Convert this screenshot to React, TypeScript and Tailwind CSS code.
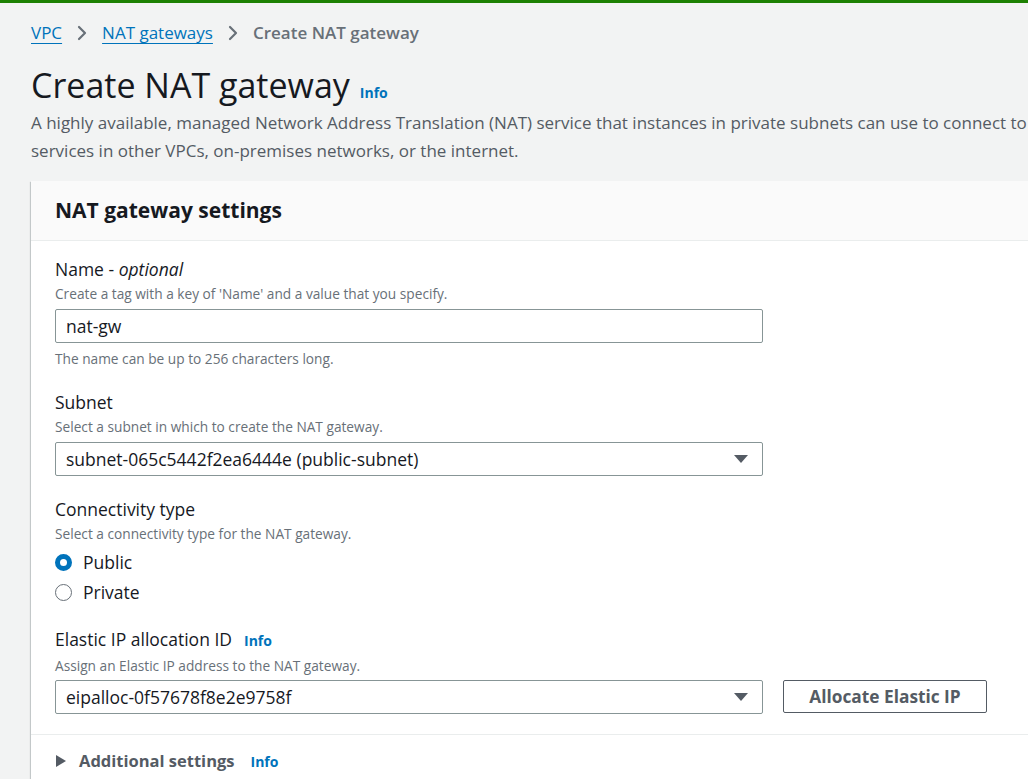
import React from 'react';

const font = { fontFamily: '"Open Sans", "Noto Sans", sans-serif' };

function Chevron() {
  return (
    <svg width="12" height="18" viewBox="0 0 12 18" className="mx-[14px] shrink-0">
      <path d="M3 3l6 6-6 6" fill="none" stroke="#687078" strokeWidth="2.2" strokeLinecap="round" strokeLinejoin="round" />
    </svg>
  );
}

function Caret() {
  return (
    <svg width="14" height="10" viewBox="0 0 14 10" className="shrink-0">
      <path d="M0 1h14L7 9z" fill="#545b64" />
    </svg>
  );
}

function Info() {
  return <span className="text-[14px] font-bold text-[#0073bb]">Info</span>;
}

function Field({ label, desc, className, children }: { label: React.ReactNode; desc?: string; className?: string; children: React.ReactNode }) {
  return (
    <div className={`flex flex-col ${className ?? ''}`}>
      <div className="text-[17.5px] leading-[26px] text-[#16191f]">{label}</div>
      {desc && <div className="mt-[1px] text-[13.7px] leading-[22px] text-[#687078]">{desc}</div>}
      {children}
    </div>
  );
}

function SelectBox({ value }: { value: string }) {
  return (
    <div className="flex h-[34px] w-[708px] items-center justify-between rounded-[2px] border border-[#879596] bg-white pl-[10px] pr-[14px]">
      <span className="text-[17.5px] text-[#16191f]">{value}</span>
      <Caret />
    </div>
  );
}

function Radio({ checked, label }: { checked?: boolean; label: string }) {
  return (
    <label className="flex h-[30px] items-center gap-[11px]">
      {checked ? (
        <span className="h-[17px] w-[17px] rounded-full border-[5px] border-[#0073bb] bg-white" />
      ) : (
        <span className="h-[17px] w-[17px] rounded-full border-[1.5px] border-[#687078] bg-white" />
      )}
      <span className="text-[17.5px] text-[#16191f]">{label}</span>
    </label>
  );
}

export default function App() {
  return (
    <div className="min-h-screen w-full overflow-hidden bg-[#f2f3f3]" style={font}>
      <div className="h-[3px] w-full bg-[#1d8102]" />
      <div className="w-[1240px] pl-[31px]">
        {/* Breadcrumb */}
        <nav className="flex h-[60px] items-center text-[17px]">
          <a className="text-[#0073bb] underline underline-offset-[4px]">VPC</a>
          <Chevron />
          <a className="text-[#0073bb] underline underline-offset-[4px]">NAT gateways</a>
          <Chevron />
          <span className="font-semibold text-[#687078]">Create NAT gateway</span>
        </nav>

        {/* Header */}
        <div className="flex items-baseline gap-[10px]">
          <h1 className="text-[34px] leading-[44px] text-[#16191f]">Create NAT gateway</h1>
          <Info />
        </div>
        <p className="mt-[2px] text-[17px] leading-[28px] text-[#545b64]">
          A highly available, managed Network Address Translation (NAT) service that instances in private subnets can use to connect to
          <br />
          services in other VPCs, on-premises networks, or the internet.
        </p>

        {/* Settings card */}
        <div className="mt-[16px] bg-white shadow-[0_1px_1px_0_rgba(0,28,36,0.3),-1px_1px_1px_0_rgba(0,28,36,0.15)]">
          <div className="flex h-[60px] items-center border-b border-[#eaeded] bg-[#fafafa] px-[24px]">
            <h2 className="text-[21px] font-bold text-[#16191f]">NAT gateway settings</h2>
          </div>

          <div className="flex flex-col gap-[19px] px-[24px] pt-[15px] pb-[20px]">
            <Field
              label={
                <>
                  Name - <i>optional</i>
                </>
              }
              desc="Create a tag with a key of 'Name' and a value that you specify."
            >
              <div className="mt-[4px] flex h-[34px] w-[708px] items-center rounded-[2px] border border-[#879596] bg-white px-[10px]">
                <span className="text-[17.5px] text-[#16191f]">nat-gw</span>
              </div>
              <div className="mt-[5px] text-[13.7px] leading-[22px] text-[#687078]">The name can be up to 256 characters long.</div>
            </Field>

            <Field label="Subnet" desc="Select a subnet in which to create the NAT gateway.">
              <div className="mt-[4px]">
                <SelectBox value="subnet-065c5442f2ea6444e (public-subnet)" />
              </div>
            </Field>

            <Field className="mt-[1px]" label="Connectivity type" desc="Select a connectivity type for the NAT gateway.">
              <div className="mt-[2px] flex flex-col">
                <Radio checked label="Public" />
                <Radio label="Private" />
              </div>
            </Field>

            <Field
              label={
                <span className="flex items-baseline gap-[12px]">
                  Elastic IP allocation ID <Info />
                </span>
              }
              desc="Assign an Elastic IP address to the NAT gateway."
            >
              <div className="mt-[3px] flex items-start gap-[20px]">
                <SelectBox value="eipalloc-0f57678f8e2e9758f" />
                <button className="h-[33px] w-[204px] rounded-[2px] border border-[#545b64] bg-white text-[17.3px] font-bold text-[#545b64]">
                  Allocate Elastic IP
                </button>
              </div>
            </Field>
          </div>

          <div className="border-t border-[#eaeded] px-[24px] pb-[24px]">
            <div className="flex h-[52px] items-center gap-[12px]">
              <svg width="12" height="14" viewBox="0 0 12 14" className="shrink-0">
                <path d="M1 1l10 6-10 6z" fill="#545b64" />
              </svg>
              <span className="text-[16.5px] font-bold text-[#545b64]">Additional settings</span>
              <span className="ml-[4px]">
                <Info />
              </span>
            </div>
          </div>
        </div>
      </div>
    </div>
  );
}
